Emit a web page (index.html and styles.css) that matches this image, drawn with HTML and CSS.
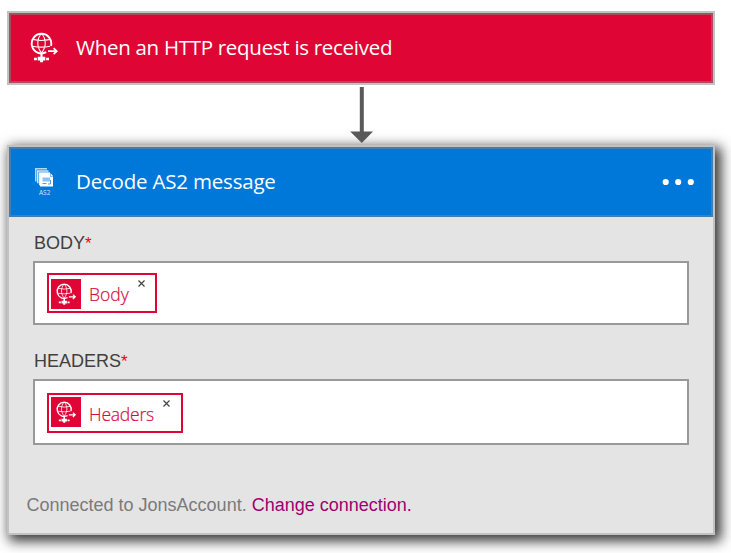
FILE: index.html
```
<!DOCTYPE html>
<html lang="en">
<head>
<meta charset="utf-8">
<title>Logic flow</title>
<link rel="stylesheet" href="styles.css">
</head>
<body>
<svg class="symbols" width="0" height="0" aria-hidden="true">
  <symbol id="globe" viewBox="0 0 28 32">
    <g fill="none" stroke="currentColor">
      <path stroke-width="1.9" d="M16.200 20.200A9.800 9.800 0 1 1 21 14"/>
      <path stroke-width="1.1" d="M11.500 1.500C6.500 7 6.500 15 11.500 21M11.500 1.500C16.500 7 16.500 15 11.500 21M3 7.400Q11.500 9.600 20 7.400M2.500 14.200Q11.500 16 20 14.200" />
      <path stroke-width="1.7" d="M18 19.200H26.600M23.600 16.200L26.800 19.200L23.600 22.200"/>
      <path stroke-width="2.2" d="M11.500 21V25"/>
    </g>
    <path fill="currentColor" d="M7.700 24.700h7.600v3.700h-2.300v1.800h-2.900v-1.800H7.700zM4 25.800h2.900v2.400H4zM16.100 25.800h2.900v2.400h-2.900z"/>
  </symbol>
</svg>
<main class="flow">
  <section class="trigger">
    <svg class="globe"><use href="#globe"/></svg>
    <h2 class="title title-trigger">When an HTTP request is received</h2>
  </section>
  <svg class="arrow" width="24" height="56" viewBox="0 0 24 56"><path fill="#595959" d="M9.800 0h4v44.500h9.200L11.800 56 .2 44.500h9.600z"/></svg>
  <section class="action">
    <header class="head">
      <svg class="as2" width="20" height="30" viewBox="0 0 20 30">
        <path fill="#b5d8f6" d="M0 0h12v1.500H1.500v12H0z"/>
        <path fill="#d3e8fa" d="M2 2.200h11.500v1.500H3.500v11.500H2z"/>
        <path fill="#e4f2fd" d="M4 4.300h11v1.400H5.500v11.500H4z"/>
        <path fill="#fff" d="M5 5h10v3.500h3v10H5z"/>
        <path fill="#8fc3ef" d="M7.500 9.500h7.500v4H7.500z"/>
        <path fill="#fff" d="M15.500 5v3h2.500z"/>
        <path fill="none" stroke="#4b9fe3" stroke-width="1" d="M7.500 15.500h4M13 16h2.500v-4"/>
        <text class="as2-label" x="4" y="27">AS2</text>
      </svg>
      <h2 class="title title-action">Decode AS2 message</h2>
      <svg class="more" width="32" height="8" viewBox="0 0 32 8" fill="#fff"><circle cx="3.700" cy="4" r="3.100"/><circle cx="16.200" cy="4" r="3.100"/><circle cx="28.800" cy="4" r="3.100"/></svg>
    </header>
    <div class="fields">
      <div class="label">BODY<span class="req">*</span></div>
      <div class="input input-body">
        <span class="token token-body"><span class="chip"><svg><use href="#globe"/></svg></span><span class="name">Body</span><svg class="close" viewBox="0 0 7 7"><path d="M.5.5l6 6M6.500.5l-6 6"/></svg></span>
      </div>
      <div class="label">HEADERS<span class="req">*</span></div>
      <div class="input input-headers">
        <span class="token token-headers"><span class="chip"><svg><use href="#globe"/></svg></span><span class="name name-headers">Headers</span><svg class="close" viewBox="0 0 7 7"><path d="M.5.5l6 6M6.500.5l-6 6"/></svg></span>
      </div>
    </div>
    <footer class="foot">Connected to JonsAccount. <a class="link">Change connection.</a></footer>
  </section>
</main>
</body>
</html>
```
FILE: styles.css
```
* { box-sizing: border-box; }
body { margin: 0; min-height: 553px; background: #fff; overflow: hidden; font-family: "Liberation Sans", Arial, sans-serif; }
.symbols { position: absolute; }
.flow { display: flex; flex-direction: column; width: 715px; height: 553px; padding: 11px 0 0 7px; }
.trigger { display: flex; align-items: center; height: 74px; flex: none; border: 2px solid #c2c2c2; background: #df0635; box-shadow: inset 0 0 0 2px #aa4b60; color: #fff; }
.globe { width: 28px; height: 32px; margin: 0 0 0 21px; }
.title { margin: 0 0 2px; font: 400 20.5px/28px "Open Sans", "Noto Sans", sans-serif; letter-spacing: -.29px; color: #fff; white-space: nowrap; }
.title-trigger { margin-left: 18px; }
.arrow { flex: none; margin: 2px 0 0 343px; display: block; z-index: 1; }
.action { flex: none; height: 390px; margin-top: 2px; border: 2px solid #c2c2c2; background: #e4e4e4; box-shadow: 4px 4px 12px 2px rgba(0, 0, 0, .8); }
.head { display: flex; align-items: center; height: 70px; background: #0078d9; border: 2px solid #427eb2; }
.as2 { margin: 1px 0 0 24px; }
.as2-label { font: 6.5px "Open Sans", sans-serif; fill: #cfe6fa; }
.title-action { margin-left: 21px; letter-spacing: -.2px; }
.more { margin: 0 17px 0 auto; }
.fields { padding: 14px 24px 0; }
.label { height: 30px; padding-left: 1px; font-size: 18px; line-height: 24px; color: #404040; }
.req { color: #f00; font-size: 17px; }
.input { display: flex; align-items: flex-start; border: 2px solid #999; background: #fff; }
.input-body { height: 64px; padding: 10px 12px; margin-bottom: 24px; }
.input-headers { height: 66px; padding: 12px; }
.token { display: flex; height: 40px; border: 2px solid #df0635; padding: 4px 2px; }
.token-body { width: 110px; }
.token-headers { width: 136px; }
.token-headers .chip { margin-top: -2px; }
.chip { width: 30px; height: 30px; flex: none; padding: 4px 0 0 4px; background: #df0635; color: #fff; }
.chip svg { display: block; width: 22px; height: 23px; }
.name { margin: 2px 0 0 8px; font: 300 17.5px/26px "Open Sans", sans-serif; color: #d80a3c; -webkit-text-stroke: .2px #d80a3c; }
.name-headers { letter-spacing: -.2px; }
.close { width: 7px; height: 7px; margin: 1px 8.5px 0 auto; fill: none; stroke: #444; stroke-width: 1.2; }
.token-headers .close { margin-right: 9.5px; }
.foot { margin: 48px 0 0 17.5px; font-size: 18px; line-height: 24px; color: #7a7a7a; white-space: nowrap; }
.link { color: #a0006e; }
```
